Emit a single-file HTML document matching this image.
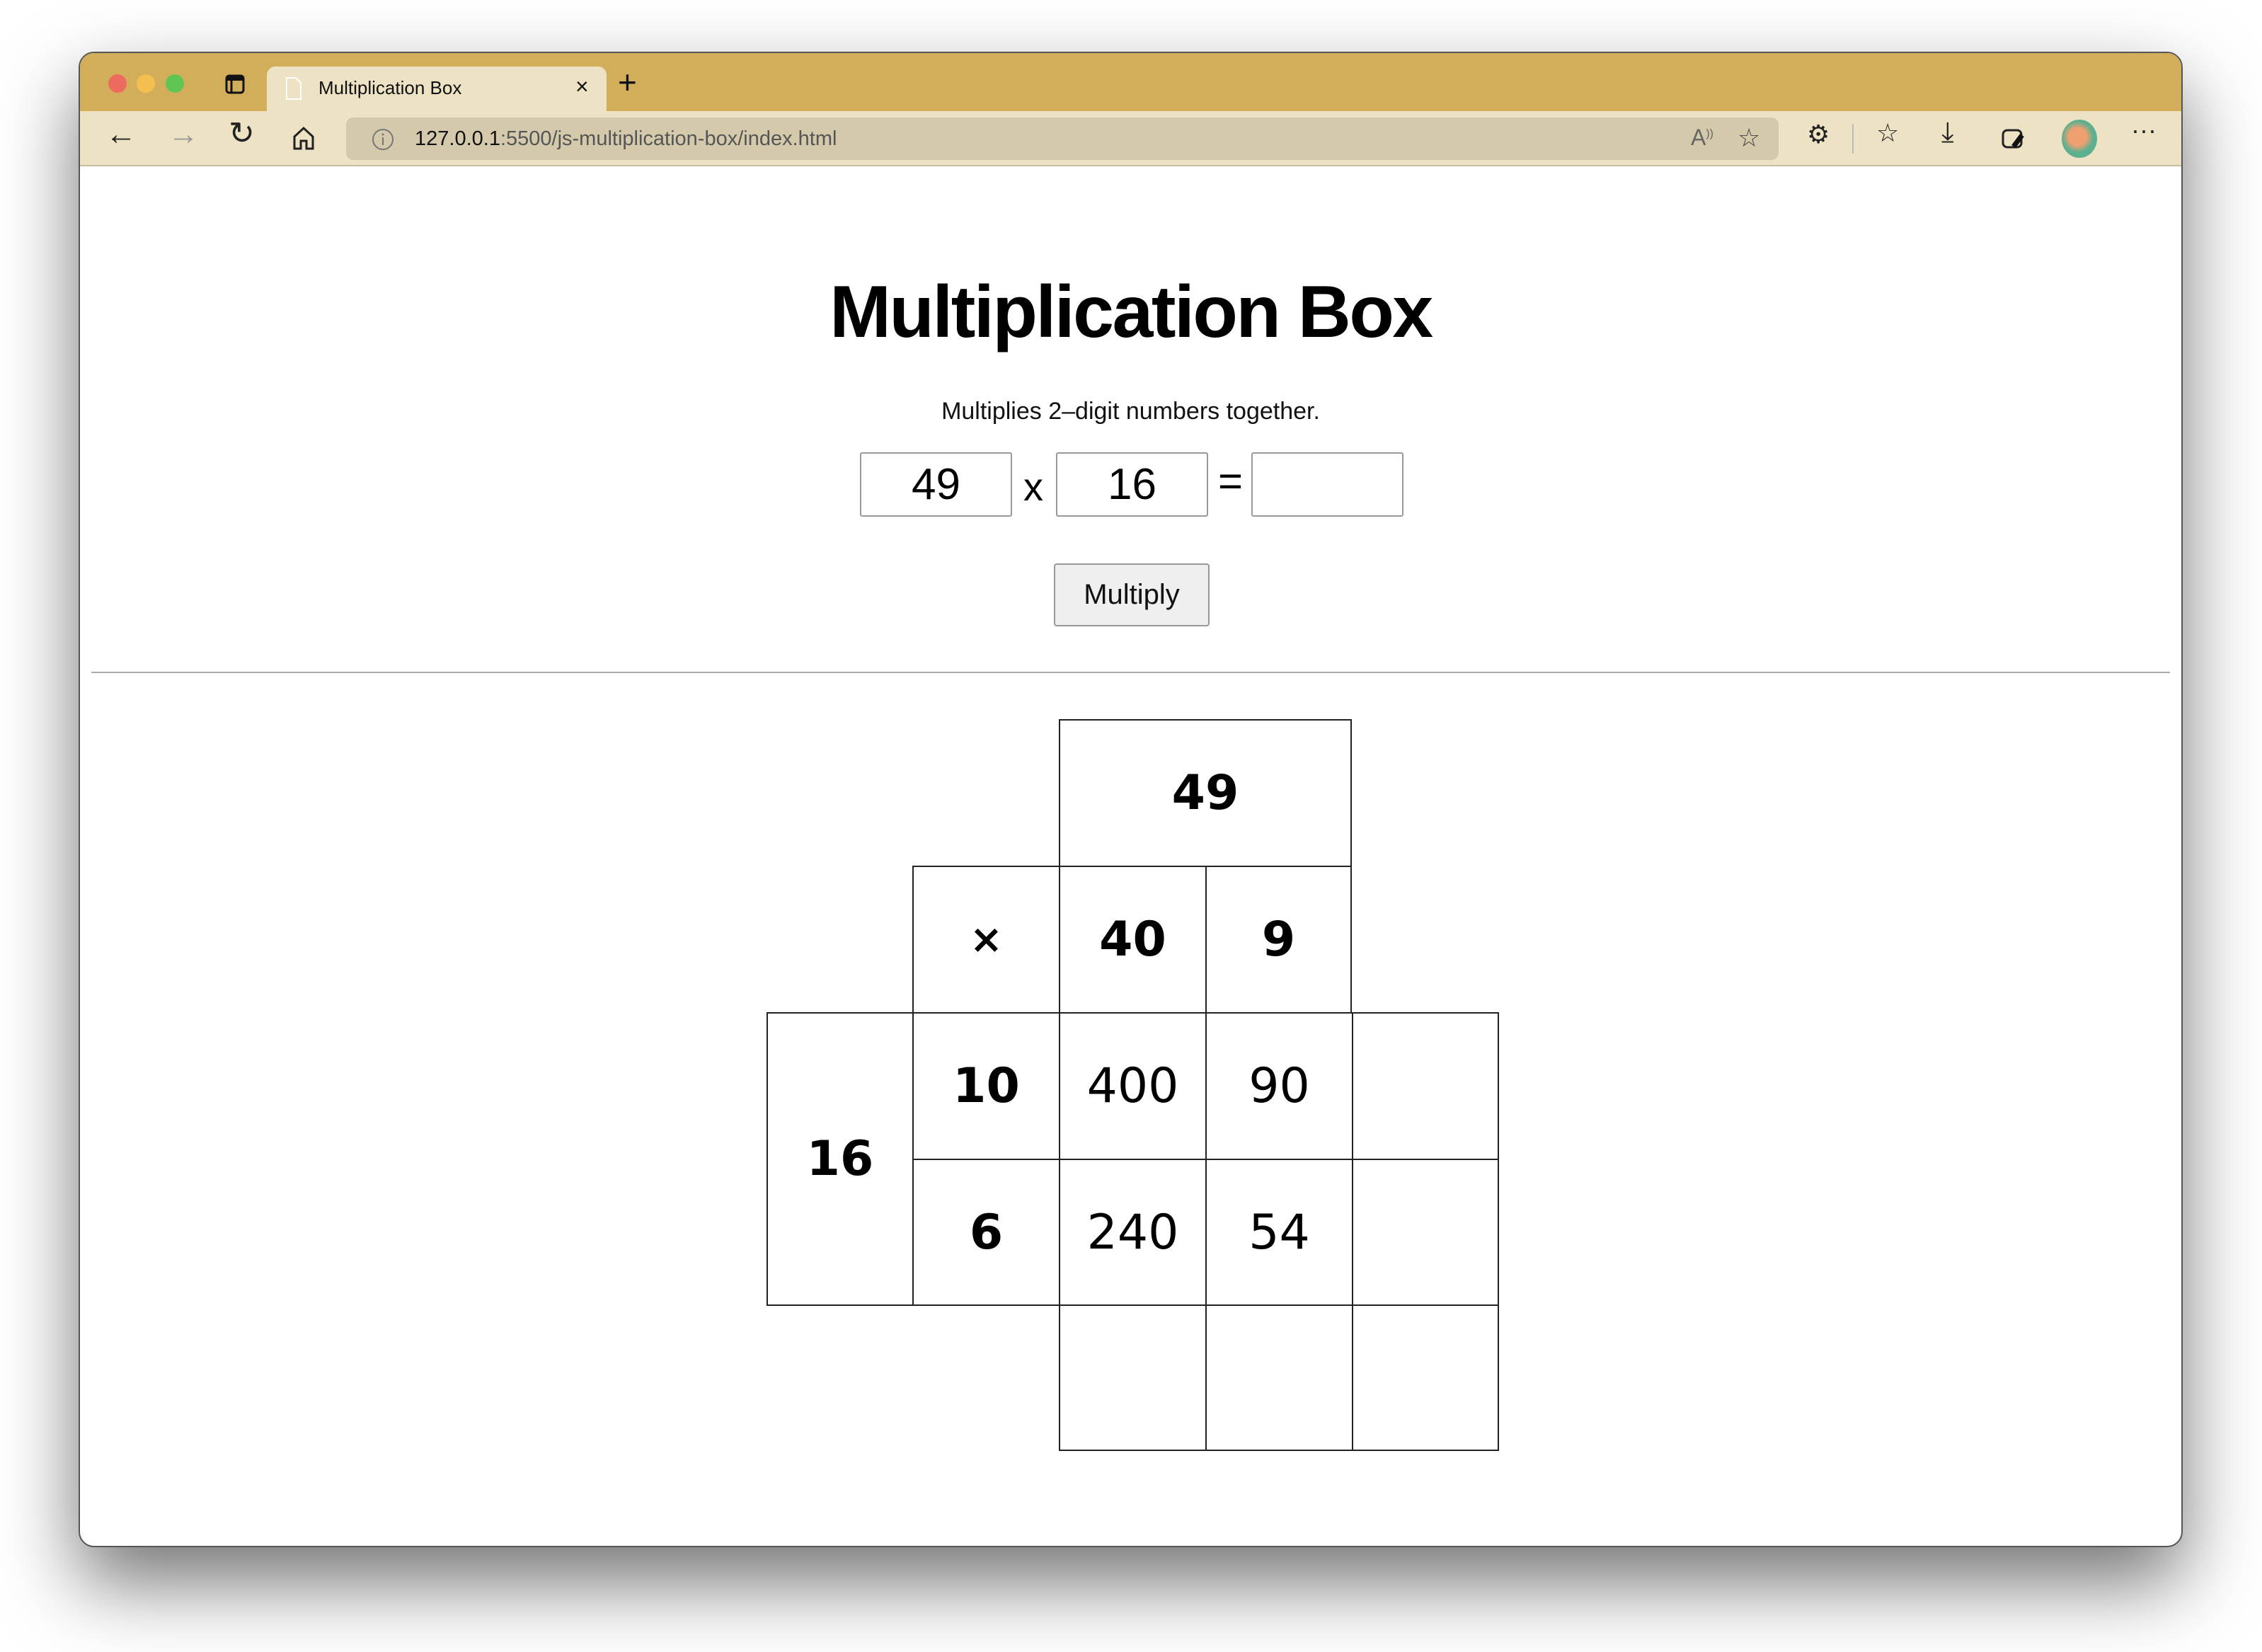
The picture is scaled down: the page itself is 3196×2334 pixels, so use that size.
<!DOCTYPE html>
<html><head><meta charset="utf-8"><style>
*{box-sizing:border-box;margin:0;padding:0}
body{width:3196px;height:2334px;background:#fff;position:relative;overflow:hidden;font-family:"Liberation Sans",sans-serif}
.win{position:absolute;left:111px;top:73px;width:2973px;height:2113px;border-radius:22px;background:#fff;border:2px solid #555;box-shadow:0 50px 110px rgba(0,0,0,.55);overflow:hidden}
.tb{position:absolute;left:0;top:0;right:0;height:82px;background:#d3ae5a}
.tool{position:absolute;left:0;top:82px;right:0;height:78px;background:#ede2c4;border-bottom:2px solid #c9bd9c}
.dot{position:absolute;top:30px;width:26px;height:26px;border-radius:50%}
.tab{position:absolute;left:264px;top:19px;width:480px;height:64px;background:#ede2c4;border-radius:12px 12px 0 0}
.abs{position:absolute}
.addr{position:absolute;left:376px;top:9px;width:2024px;height:60px;background:#d4c9ab;border-radius:10px}
.c{position:absolute;border:2px solid #222;display:flex;align-items:center;justify-content:center;font-size:68px;color:#000;font-family:"DejaVu Sans","Liberation Sans",sans-serif}
.b{font-weight:bold}
.inp{position:absolute;top:564px;height:91px;width:215px;border:2px solid #999;border-radius:3px;display:flex;align-items:center;justify-content:center;font-size:62px}
</style></head><body>
<div class="win">
 <div class="tb">
  <div class="dot" style="left:40px;background:#ec6a5e"></div>
  <div class="dot" style="left:80px;background:#f4bf4f"></div>
  <div class="dot" style="left:121px;background:#61c554"></div>
  <svg class="abs" style="left:205px;top:30px" width="28" height="28" viewBox="0 0 28 28"><rect x="2" y="2" width="24" height="24" rx="4" fill="none" stroke="#111" stroke-width="3"/><rect x="2" y="2" width="24" height="7" fill="#111"/><line x1="9" y1="9" x2="9" y2="26" stroke="#111" stroke-width="3"/></svg>
  <div class="tab">
   <svg class="abs" style="left:26px;top:14px" width="24" height="34" viewBox="0 0 24 34"><path d="M2 2h13l7 7v23H2z" fill="none" stroke="#fff" stroke-width="2"/></svg>
   <div class="abs" style="left:73px;top:15px;font-size:26px;color:#111">Multiplication Box</div>
   <div class="abs" style="left:436px;top:10px;font-size:32px;color:#111">×</div>
  </div>
  <div class="abs" style="left:760px;top:14px;font-size:46px;color:#111;font-weight:300">+</div>
 </div>
 <div class="tool">
  <div class="abs" style="left:36px;top:8px;font-size:44px;color:#222">←</div>
  <div class="abs" style="left:124px;top:8px;font-size:44px;color:#999">→</div>
  <div class="abs" style="left:210px;top:6px;font-size:44px;color:#222">↻</div>
  <svg class="abs" style="left:300px;top:20px" width="32" height="36" viewBox="0 0 32 36"><path d="M3 16L16 4l13 12v17H20V22h-8v11H3z" fill="none" stroke="#222" stroke-width="3"/></svg>
  <div class="addr">
   <svg class="abs" style="left:36px;top:15px" width="32" height="32" viewBox="0 0 32 32"><circle cx="16" cy="16" r="14" fill="none" stroke="#777" stroke-width="2"/><line x1="16" y1="13" x2="16" y2="24" stroke="#777" stroke-width="2"/><circle cx="16" cy="9" r="1.5" fill="#777"/></svg>
   <div class="abs" style="left:97px;top:14px;font-size:29px;color:#555"><span style="color:#111">127.0.0.1</span>:5500/js-multiplication-box/index.html</div>
   <div class="abs" style="left:1900px;top:10px;font-size:32px;color:#666">A<sup style="font-size:16px">))</sup></div>
   <div class="abs" style="left:1966px;top:8px;font-size:36px;color:#444">☆</div>
  </div>
  <div class="abs" style="left:2440px;top:12px;font-size:36px;color:#222">⚙</div>
  <div class="abs" style="left:2504px;top:18px;width:2px;height:42px;background:#bbb"></div>
  <div class="abs" style="left:2538px;top:10px;font-size:36px;color:#222">☆</div>
  <div class="abs" style="left:2630px;top:8px;font-size:40px;color:#222">⤓</div>
  <svg class="abs" style="left:2714px;top:20px" width="36" height="36" viewBox="0 0 36 36"><rect x="3" y="7" width="26" height="24" rx="6" fill="none" stroke="#222" stroke-width="3"/><path d="M18 30L30 14" stroke="#111" stroke-width="7"/></svg>
  <div class="abs" style="left:2800px;top:12px;width:50px;height:54px;border-radius:50%;background:radial-gradient(circle at 45% 45%,#f0a070 0 30%,#5bb090 55%)"></div>
  <div class="abs" style="left:2898px;top:6px;font-size:36px;color:#222">···</div>
 </div>

 <div class="abs" style="left:0;right:0;top:307px;text-align:center;font-size:104px;font-weight:bold;letter-spacing:-2.5px;color:#000">Multiplication Box</div>
 <div class="abs" style="left:0;right:0;top:487px;text-align:center;font-size:34px;color:#111">Multiplies 2–digit numbers together.</div>
 <div class="inp" style="left:1102px">49</div>
 <div class="abs" style="left:1333px;top:580px;font-size:56px">x</div>
 <div class="inp" style="left:1379px">16</div>
 <div class="abs" style="left:1608px;top:570px;font-size:60px">=</div>
 <div class="inp" style="left:1655px"></div>
 <div class="abs" style="left:1376px;top:721px;width:220px;height:89px;background:#efefef;border:2px solid #999;border-radius:4px;display:flex;align-items:center;justify-content:center;font-size:40px;color:#111">Multiply</div>
 <div class="abs" style="left:16px;right:16px;top:874px;height:2px;background:#aaa"></div>

 <div class="c b" style="left:1383px;top:941px;width:414px;height:209px">49</div>
 <div class="c b" style="left:1176px;top:1148px;width:209px;height:209px;font-size:56px">×</div>
 <div class="c b" style="left:1383px;top:1148px;width:209px;height:209px">40</div>
 <div class="c b" style="left:1590px;top:1148px;width:207px;height:209px">9</div>
 <div class="c b" style="left:970px;top:1355px;width:208px;height:415px">16</div>
 <div class="c b" style="left:1176px;top:1355px;width:209px;height:209px">10</div>
 <div class="c" style="left:1383px;top:1355px;width:209px;height:209px">400</div>
 <div class="c" style="left:1590px;top:1355px;width:209px;height:209px">90</div>
 <div class="c" style="left:1797px;top:1355px;width:208px;height:209px"></div>
 <div class="c b" style="left:1176px;top:1562px;width:209px;height:208px">6</div>
 <div class="c" style="left:1383px;top:1562px;width:209px;height:208px">240</div>
 <div class="c" style="left:1590px;top:1562px;width:209px;height:208px">54</div>
 <div class="c" style="left:1797px;top:1562px;width:208px;height:208px"></div>
 <div class="c" style="left:1383px;top:1768px;width:209px;height:207px"></div>
 <div class="c" style="left:1590px;top:1768px;width:209px;height:207px"></div>
 <div class="c" style="left:1797px;top:1768px;width:208px;height:207px"></div>
</div>
</body></html>
